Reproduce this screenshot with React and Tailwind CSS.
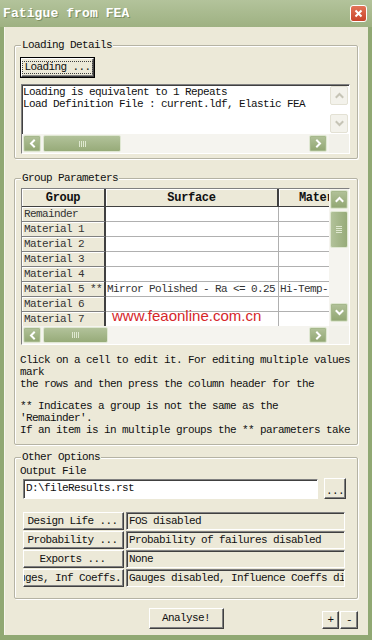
import React from "react";

const mono = "font-['Liberation_Mono','DejaVu_Sans_Mono',monospace] text-[11px] tracking-[-0.6px] text-[#101010]";
const raised = "bg-[#ece9d8] border border-t-white border-l-white border-r-[#404040] border-b-[#404040] shadow-[inset_-1px_-1px_0_#808080]";
const sunken = "border border-t-[#808080] border-l-[#808080] border-r-white border-b-white shadow-[inset_1px_1px_0_#404040]";

function Chevron({ dir, color }) {
  const d = {
    up: "M1.5 6 L4.5 3 L7.5 6",
    down: "M1.5 3 L4.5 6 L7.5 3",
    left: "M6 1.5 L3 4.5 L6 7.5",
    right: "M3 1.5 L6 4.5 L3 7.5",
  }[dir];
  return (
    <svg width="9" height="9" viewBox="0 0 9 9">
      <path d={d} stroke={color} strokeWidth="2" fill="none" strokeLinecap="square" />
    </svg>
  );
}

function SBtn({ dir, disabled, className = "" }) {
  return (
    <div
      className={`flex items-center justify-center rounded-[2px] border ${
        disabled
          ? "border-[#e3e1d4] bg-[#f3f2eb]"
          : "border-[#dfe7d2] bg-linear-to-b from-[#b2c29a] to-[#91a672] shadow-[inset_0_0_0_1px_#a6b88c]"
      } ${className}`}
    >
      <Chevron dir={dir} color={disabled ? "#c6c4b6" : "#ffffff"} />
    </div>
  );
}

function HThumb({ className = "" }) {
  return (
    <div
      className={`flex items-center justify-center gap-[1px] rounded-[2px] border border-[#dfe7d2] bg-linear-to-b from-[#b2c29a] to-[#97ab79] ${className}`}
    >
      <div className="h-[6px] w-[1px] bg-[#dfe8d0]" />
      <div className="h-[6px] w-[1px] bg-[#dfe8d0]" />
      <div className="h-[6px] w-[1px] bg-[#dfe8d0]" />
      <div className="h-[6px] w-[1px] bg-[#dfe8d0]" />
    </div>
  );
}

function VThumb({ className = "" }) {
  return (
    <div
      className={`flex flex-col items-center justify-center gap-[1px] rounded-[2px] border border-[#dfe7d2] bg-linear-to-r from-[#b2c29a] to-[#97ab79] ${className}`}
    >
      <div className="h-[1px] w-[6px] bg-[#dfe8d0]" />
      <div className="h-[1px] w-[6px] bg-[#dfe8d0]" />
      <div className="h-[1px] w-[6px] bg-[#dfe8d0]" />
      <div className="h-[1px] w-[6px] bg-[#dfe8d0]" />
    </div>
  );
}

function Group({ title, className = "", children }) {
  return (
    <div
      className={`relative ml-[10px] w-[344px] rounded-[2px] border border-[#b5b3a4] shadow-[inset_1px_1px_0_#ffffff,1px_1px_0_#ffffff] ${className}`}
    >
      <span className={`absolute left-[6px] top-[-7px] bg-[#ece9d8] px-[1px] leading-[12px] ${mono}`}>
        {title}
      </span>
      {children}
    </div>
  );
}

const rows = [
  ["Remainder", "", ""],
  ["Material 1", "", ""],
  ["Material 2", "", ""],
  ["Material 3", "", ""],
  ["Material 4", "", ""],
  ["Material 5 **", "Mirror Polished - Ra <= 0.25", "Hi-Temp-"],
  ["Material 6", "", ""],
  ["Material 7", "", ""],
];

const options = [
  ["Design Life ...", "FOS disabled", "justify-center"],
  ["Probability ...", "Probability of failures disabled", "justify-center"],
  ["Exports ...", "None", "justify-center"],
  ["Gauges, Inf Coeffs.", "Gauges disabled, Influence Coeffs disabled", "justify-end"],
];

export default function App() {
  return (
    <div className="flex h-[640px] w-[372px] flex-col overflow-hidden bg-[#90a873]">
      {/* Title bar */}
      <div className="flex h-[27px] shrink-0 items-center bg-linear-to-b from-[#b3c39b] to-[#9eb182] pl-[3px]">
        <span className="font-['Liberation_Mono','DejaVu_Sans_Mono',monospace] text-[13px] font-bold tracking-[0.1px] text-white [text-shadow:1px_1px_0_#7d8f62]">
          Fatigue from FEA
        </span>
        <div className="ml-auto mr-[5px] flex h-[17px] w-[17px] items-center justify-center rounded-[3px] border border-white bg-linear-to-b from-[#e27357] to-[#c9432a]">
          <svg width="9" height="9" viewBox="0 0 9 9">
            <path d="M1.5 1.5 L7.5 7.5 M7.5 1.5 L1.5 7.5" stroke="#ffffff" strokeWidth="2" />
          </svg>
        </div>
      </div>

      {/* Body */}
      <div className="mx-[4px] mb-[5px] flex flex-1 flex-col bg-[#ece9d8] shadow-[inset_1px_0_0_#f7f6ee]">
        {/* Loading Details */}
        <Group title="Loading Details" className="mt-[18px] h-[114px]">
          <div className="pl-[5px] pt-[11px]">
            <div className="flex h-[21px] w-[75px] items-center justify-center border border-black">
              <div className={`flex h-full w-full items-center justify-center ${raised}`}>
                <span className={`border border-dotted border-[#404040] px-[1px] leading-[11px] ${mono}`}>
                  Loading ...
                </span>
              </div>
            </div>
            <div className={`mt-[6px] ml-[1px] flex h-[70px] w-[329px] flex-col bg-white ${sunken}`}>
              <div className="flex flex-1">
                <div className={`flex-1 pl-[1px] pt-[1px] leading-[12px] whitespace-nowrap ${mono}`}>
                  <div>Loading is equivalent to 1 Repeats</div>
                  <div>Load Definition File : current.ldf, Elastic FEA</div>
                </div>
                <div className="flex w-[20px] flex-col p-[1px]">
                  <SBtn dir="up" disabled className="h-[19px]" />
                  <div className="flex-1" />
                  <SBtn dir="down" disabled className="h-[19px]" />
                </div>
              </div>
              <div className="flex h-[19px] bg-[#f5f4ef]">
                <div className="flex flex-1 items-stretch py-[1px]">
                  <SBtn dir="left" className="ml-[1px] w-[18px]" />
                  <HThumb className="ml-[2px] w-[78px]" />
                  <div className="flex-1" />
                  <SBtn dir="right" className="mr-[2px] w-[18px]" />
                </div>
                <div className="w-[20px] bg-[#f2f1ea]" />
              </div>
            </div>
          </div>
        </Group>

        {/* Group Parameters */}
        <Group title="Group Parameters" className="mt-[19px] h-[267px]">
          <div className="pl-[6px] pt-[9px]">
            <div className={`relative flex h-[157px] w-[329px] flex-col bg-white ${sunken}`}>
              <div className="flex h-[137px]">
                <div className="flex-1 overflow-hidden">
                  <div className="w-[352px]">
                    {/* header */}
                    <div className="flex h-[18px] font-['Liberation_Mono','DejaVu_Sans_Mono',monospace] text-[12px] font-bold tracking-[-0.3px] text-[#101010]">
                      <div className="flex w-[84px] items-center justify-center border-r-2 border-b border-r-[#404040] border-b-[#404040] bg-[#ece9d8] shadow-[inset_1px_1px_0_#ffffff]">
                        Group
                      </div>
                      <div className="flex w-[173px] items-center justify-center border-r-2 border-b border-r-[#404040] border-b-[#404040] bg-[#ece9d8] shadow-[inset_1px_1px_0_#ffffff]">
                        Surface
                      </div>
                      <div className="flex w-[95px] items-center justify-center border-b border-b-[#404040] bg-[#ece9d8] shadow-[inset_1px_1px_0_#ffffff]">
                        Material
                      </div>
                    </div>
                    {rows.map(([g, s, m]) => (
                      <div key={g} className={`flex h-[15px] leading-[14px] whitespace-nowrap ${mono}`}>
                        <div className="w-[84px] overflow-hidden border-r-2 border-b border-r-[#404040] border-b-[#808080] bg-[#ece9d8] pl-[2px] text-[#333] shadow-[inset_1px_1px_0_#ffffff]">
                          {g}
                        </div>
                        <div className="w-[173px] overflow-hidden border-r border-b border-[#b0b0b0] pl-[1px] text-[#333]">
                          {s}
                        </div>
                        <div className="w-[95px] overflow-hidden border-b border-[#b0b0b0] pl-[1px] text-[#333]">
                          {m}
                        </div>
                      </div>
                    ))}
                  </div>
                </div>
                <div className="flex w-[20px] flex-col bg-[#f5f4ef] px-[1px] pt-[1px] pb-[4px]">
                  <SBtn dir="up" className="h-[19px]" />
                  <VThumb className="mt-[2px] h-[37px]" />
                  <div className="flex-1" />
                  <SBtn dir="down" className="h-[19px]" />
                </div>
              </div>
              <div className="flex h-[18px] bg-[#f5f4ef]">
                <div className="flex flex-1 items-stretch py-[1px]">
                  <SBtn dir="left" className="ml-[1px] w-[18px]" />
                  <HThumb className="ml-[2px] w-[65px]" />
                  <div className="flex-1" />
                  <SBtn dir="right" className="mr-[2px] w-[18px]" />
                </div>
                <div className="w-[20px] bg-[#f2f1ea]" />
              </div>
              <span className="pointer-events-none absolute left-[90px] top-[119px] font-['Liberation_Sans',Arial,sans-serif] text-[15px] leading-[15px] text-[#d6262a]">
                www.feaonline.com.cn
              </span>
            </div>
            <div className={`mt-[9px] ml-[-1px] leading-[12px] whitespace-nowrap ${mono}`}>
              <div>Click on a cell to edit it. For editing multiple values</div>
              <div>mark</div>
              <div>the rows and then press the column header for the</div>
              <div className="h-[10px]" />
              <div>** Indicates a group is not the same as the</div>
              <div>'Remainder'.</div>
              <div>If an item is in multiple groups the ** parameters take</div>
            </div>
          </div>
        </Group>

        {/* Other Options */}
        <Group title="Other Options" className="mt-[12px] h-[142px]">
          <div className="pl-[5px] pt-[7px]">
            <div className={`leading-[12px] ${mono}`}>Output File</div>
            <div className="mt-[1px] flex items-center">
              <div className={`ml-[3px] flex h-[20px] w-[295px] items-center bg-white pl-[2px] ${sunken} ${mono}`}>
                D:\fileResults.rst
              </div>
              <div className={`ml-[6px] flex h-[21px] w-[22px] items-end justify-center pb-[3px] leading-[8px] ${raised} ${mono}`}>
                ...
              </div>
            </div>
            <div className="mt-[13px] ml-[3px] flex flex-col gap-[1px]">
              {options.map(([b, v, j]) => (
                <div key={b} className="flex h-[18px] gap-[2px]">
                  <div className={`flex w-[101px] items-center overflow-hidden whitespace-nowrap pr-[2px] ${j} ${raised} ${mono}`}>
                    {b}
                  </div>
                  <div className={`flex w-[219px] items-center overflow-hidden whitespace-nowrap bg-[#ece9d8] pl-[2px] ${sunken} ${mono}`}>
                    {v}
                  </div>
                </div>
              ))}
            </div>
          </div>
        </Group>

        {/* Bottom buttons */}
        <div className="mt-[9px] grid grid-cols-[1fr_auto_1fr] items-start">
          <div />
          <div className={`flex h-[21px] w-[75px] items-center justify-center ${raised} ${mono}`}>Analyse!</div>
          <div className="flex justify-end pr-[10px] pt-[3px]">
            <div className={`flex h-[18px] w-[17px] items-center justify-center ${raised} ${mono}`}>+</div>
            <div className={`ml-[1px] flex h-[18px] w-[18px] items-center justify-center ${raised} ${mono}`}>-</div>
          </div>
        </div>
      </div>
    </div>
  );
}
